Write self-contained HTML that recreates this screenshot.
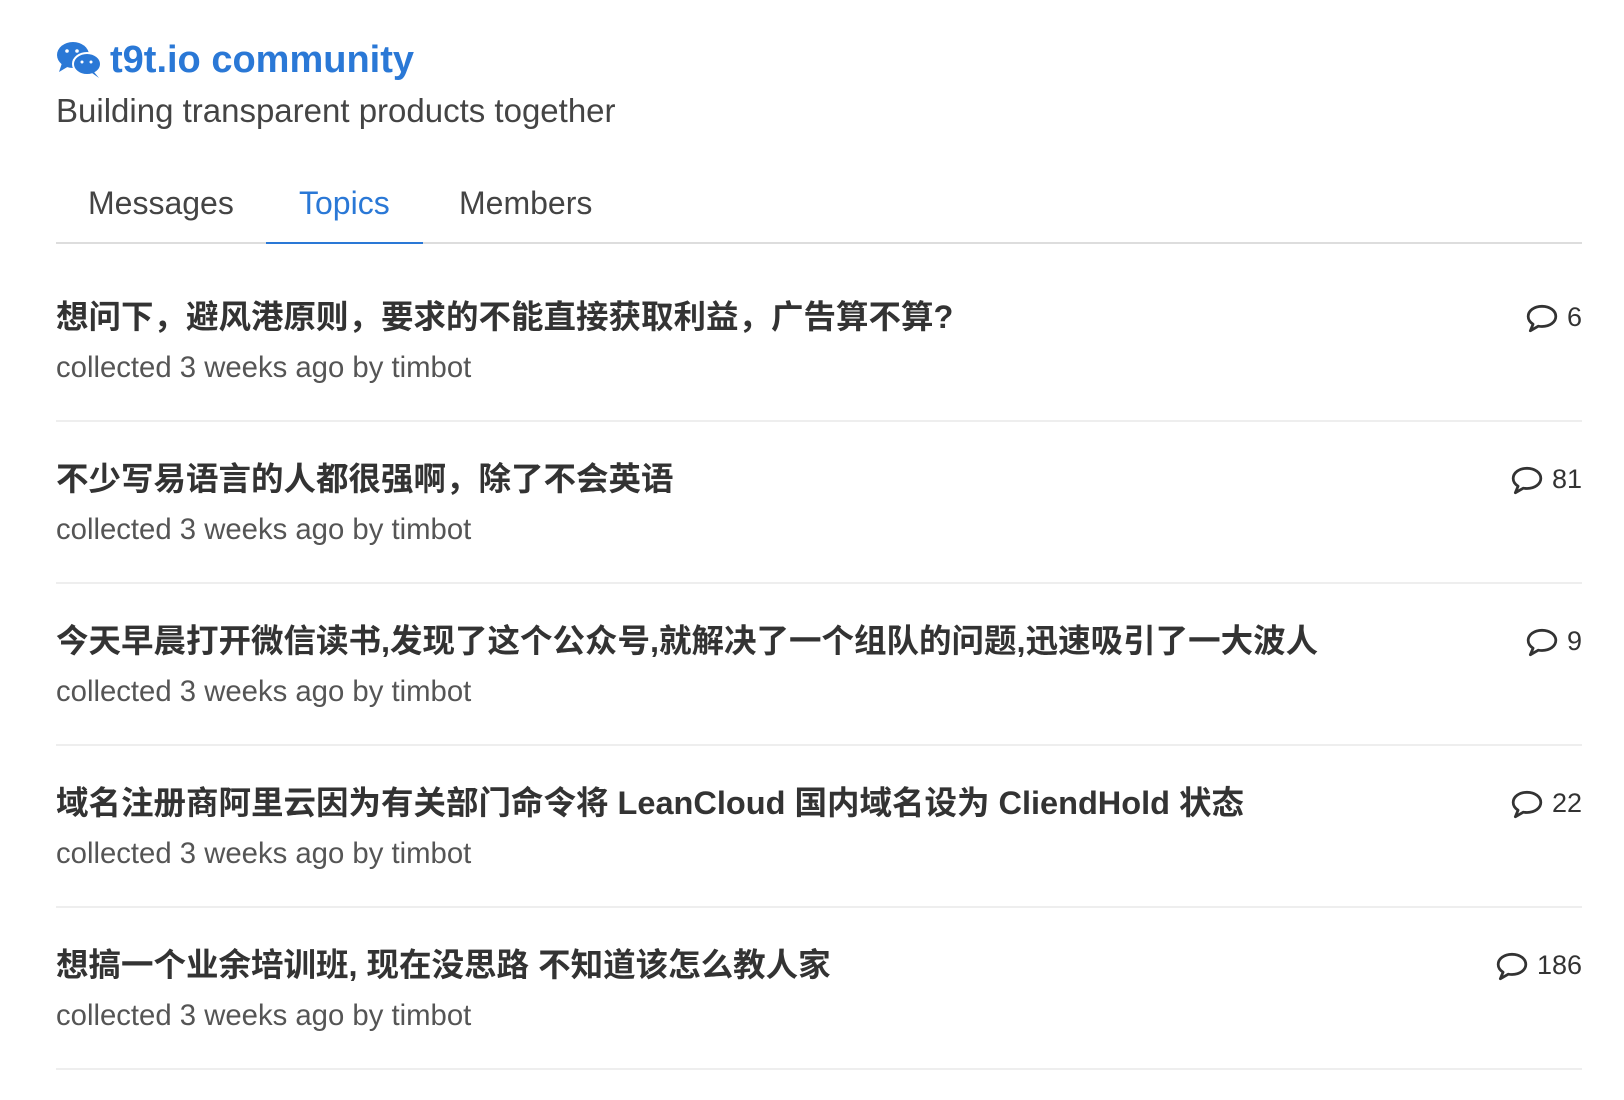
<!DOCTYPE html>
<html><head><meta charset="utf-8"><style>
*{margin:0;padding:0;box-sizing:border-box}
body{width:1624px;height:1100px;background:#fff;font-family:"Liberation Sans","Noto Sans CJK SC",sans-serif;color:#333;position:relative;overflow:hidden}
.title{position:absolute;left:56px;top:38px;height:44px;display:flex;align-items:center;color:#2a78d6;font-weight:bold;font-size:38px}
.title svg{margin-right:8px}
.sub{position:absolute;left:56px;top:92px;font-size:33px;color:#444}
.tabs{position:absolute;left:56px;top:180px;width:1526px;height:64px;border-bottom:2px solid #ddd}
.tab{position:absolute;top:5px;font-size:32px;color:#444}
.tab.active{color:#2a78d6}
.ul{position:absolute;left:210px;width:157px;bottom:-2px;height:2px;background:#2a78d6}
.row{position:absolute;left:56px;width:1526px;height:162px;border-bottom:2px solid #eee}
.row .t{position:absolute;left:0;top:31px;font-size:32.5px;font-weight:bold;color:#333;white-space:nowrap}
.row .m{position:absolute;left:0;top:91px;font-size:29.3px;color:#555}
.row .c{position:absolute;right:0;top:42px;font-size:27px;color:#333;display:flex;align-items:center}
.row .c svg{margin-right:8px}
</style></head><body>
<div class="title"><svg width="46" height="38" viewBox="0 0 46 38"><ellipse cx="17" cy="14" rx="16" ry="13" fill="#2a78d6"/><path d="M6 22 L3 31 L13 25Z" fill="#2a78d6"/><ellipse cx="31" cy="23" rx="14" ry="11" fill="#2a78d6" stroke="#fff" stroke-width="2"/><path d="M38 31 L43 37 L36 32Z" fill="#2a78d6"/><circle cx="11" cy="10" r="1.8" fill="#fff"/><circle cx="21" cy="10" r="1.8" fill="#fff"/><circle cx="26" cy="21" r="1.5" fill="#fff"/><circle cx="35" cy="21" r="1.5" fill="#fff"/></svg>t9t.io community</div>
<div class="sub">Building transparent products together</div>
<div class="tabs">
<div class="tab" style="left:32px">Messages</div>
<div class="tab active" style="left:243px">Topics</div>
<div class="tab" style="left:403px">Members</div>
<div class="ul"></div>
</div>
<div class="row" style="top:260px"><div class="t">想问下，避风港原则，要求的不能直接获取利益，广告算不算?</div><div class="m">collected 3 weeks ago by timbot</div><div class="c"><svg width="34" height="30" viewBox="0 0 32 28"><path d="M16 3C8.5 3 3 7.3 3 12.5c0 3 1.8 5.6 4.6 7.3L5 26l7.5-4.3c1.1.2 2.3.3 3.5.3 7.5 0 13-4.3 13-9.5S23.5 3 16 3z" fill="none" stroke="#333" stroke-width="2.6" stroke-linejoin="round"/></svg>6</div></div>
<div class="row" style="top:422px"><div class="t">不少写易语言的人都很强啊，除了不会英语</div><div class="m">collected 3 weeks ago by timbot</div><div class="c"><svg width="34" height="30" viewBox="0 0 32 28"><path d="M16 3C8.5 3 3 7.3 3 12.5c0 3 1.8 5.6 4.6 7.3L5 26l7.5-4.3c1.1.2 2.3.3 3.5.3 7.5 0 13-4.3 13-9.5S23.5 3 16 3z" fill="none" stroke="#333" stroke-width="2.6" stroke-linejoin="round"/></svg>81</div></div>
<div class="row" style="top:584px"><div class="t">今天早晨打开微信读书,发现了这个公众号,就解决了一个组队的问题,迅速吸引了一大波人</div><div class="m">collected 3 weeks ago by timbot</div><div class="c"><svg width="34" height="30" viewBox="0 0 32 28"><path d="M16 3C8.5 3 3 7.3 3 12.5c0 3 1.8 5.6 4.6 7.3L5 26l7.5-4.3c1.1.2 2.3.3 3.5.3 7.5 0 13-4.3 13-9.5S23.5 3 16 3z" fill="none" stroke="#333" stroke-width="2.6" stroke-linejoin="round"/></svg>9</div></div>
<div class="row" style="top:746px"><div class="t">域名注册商阿里云因为有关部门命令将 LeanCloud 国内域名设为 CliendHold 状态</div><div class="m">collected 3 weeks ago by timbot</div><div class="c"><svg width="34" height="30" viewBox="0 0 32 28"><path d="M16 3C8.5 3 3 7.3 3 12.5c0 3 1.8 5.6 4.6 7.3L5 26l7.5-4.3c1.1.2 2.3.3 3.5.3 7.5 0 13-4.3 13-9.5S23.5 3 16 3z" fill="none" stroke="#333" stroke-width="2.6" stroke-linejoin="round"/></svg>22</div></div>
<div class="row" style="top:908px"><div class="t">想搞一个业余培训班, 现在没思路 不知道该怎么教人家</div><div class="m">collected 3 weeks ago by timbot</div><div class="c"><svg width="34" height="30" viewBox="0 0 32 28"><path d="M16 3C8.5 3 3 7.3 3 12.5c0 3 1.8 5.6 4.6 7.3L5 26l7.5-4.3c1.1.2 2.3.3 3.5.3 7.5 0 13-4.3 13-9.5S23.5 3 16 3z" fill="none" stroke="#333" stroke-width="2.6" stroke-linejoin="round"/></svg>186</div></div>
</body></html>
